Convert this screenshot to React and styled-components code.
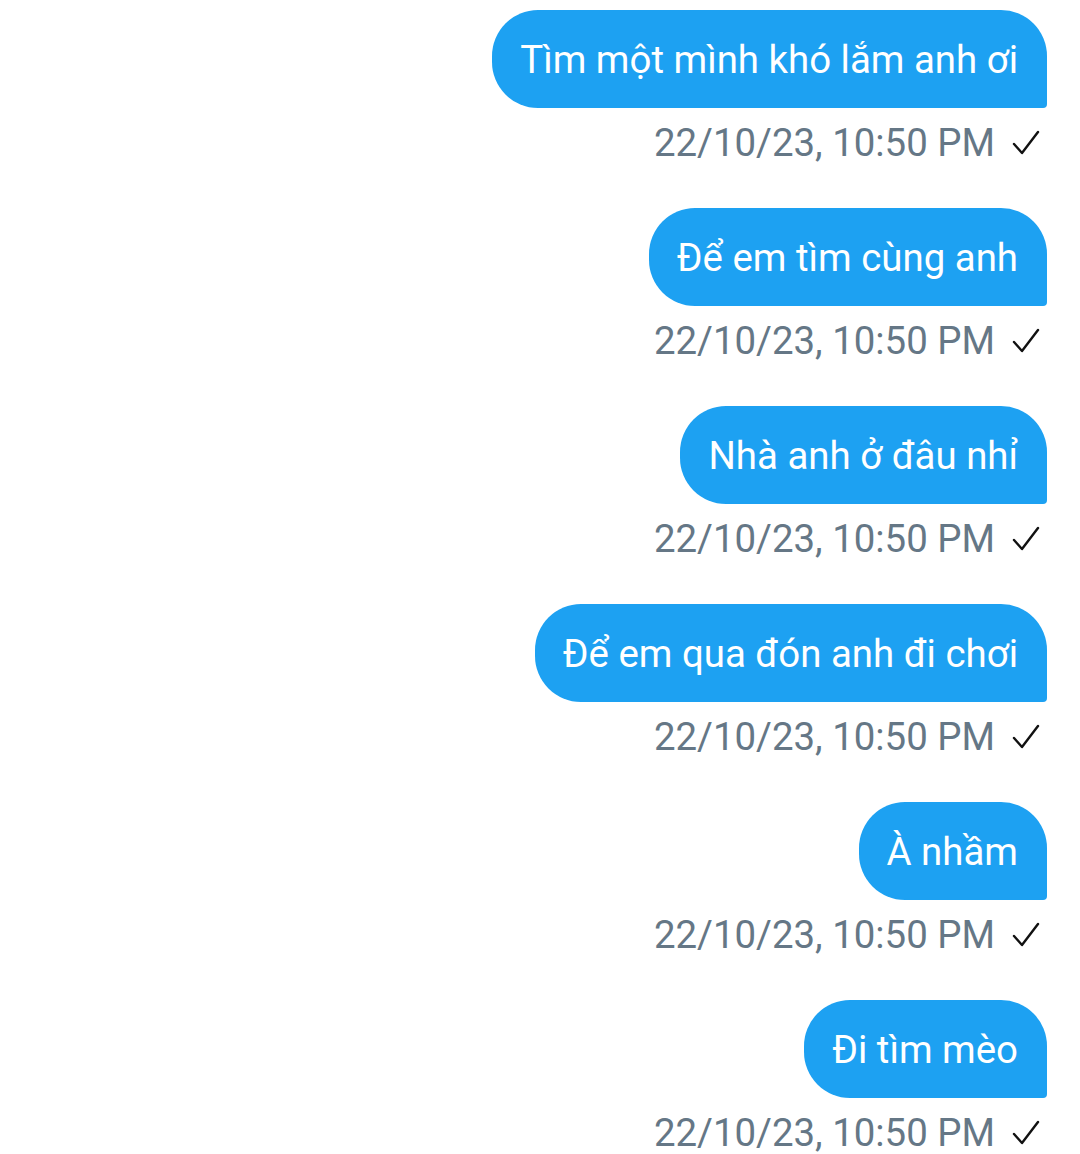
import React from 'react';
import styled, { createGlobalStyle } from 'styled-components';

const GlobalStyle = createGlobalStyle`
  html, body {
    margin: 0;
    padding: 0;
    background: #ffffff;
  }
  body {
    font-family: Roboto, 'Noto Sans', sans-serif;
  }
`;

const Thread = styled.div`
  display: flex;
  flex-direction: column;
  align-items: flex-end;
  padding: 10px 33px 0 0;
  gap: 44px;
`;

const Message = styled.div`
  display: flex;
  flex-direction: column;
  align-items: flex-end;
`;

const Bubble = styled.div`
  background: #1da1f2;
  color: #ffffff;
  font-size: 38.4px;
  line-height: 46px;
  padding: 27px 29px 25px 28px;
  border-radius: 46px 46px 4px 46px;
  white-space: nowrap;
`;

const Meta = styled.div`
  display: flex;
  align-items: center;
  gap: 17px;
  margin-top: 14px;
  padding-right: 7px;
  color: #657786;
  font-size: 38.4px;
  line-height: 42px;
`;

const Check = () => (
  <svg width="28" height="26" viewBox="0 0 28 26" fill="none">
    <polyline points="2,14 10,23 26,2" stroke="#111" strokeWidth="2.4" strokeLinecap="round" strokeLinejoin="round" />
  </svg>
);

const messages = [
  'Tìm một mình khó lắm anh ơi',
  'Để em tìm cùng anh',
  'Nhà anh ở đâu nhỉ',
  'Để em qua đón anh đi chơi',
  'À nhầm',
  'Đi tìm mèo',
];

const App = () => (
  <>
    <GlobalStyle />
    <Thread>
      {messages.map((text, i) => (
        <Message key={i}>
          <Bubble>{text}</Bubble>
          <Meta>
            <span>22/10/23, 10:50 PM</span>
            <Check />
          </Meta>
        </Message>
      ))}
    </Thread>
  </>
);

export default App;
